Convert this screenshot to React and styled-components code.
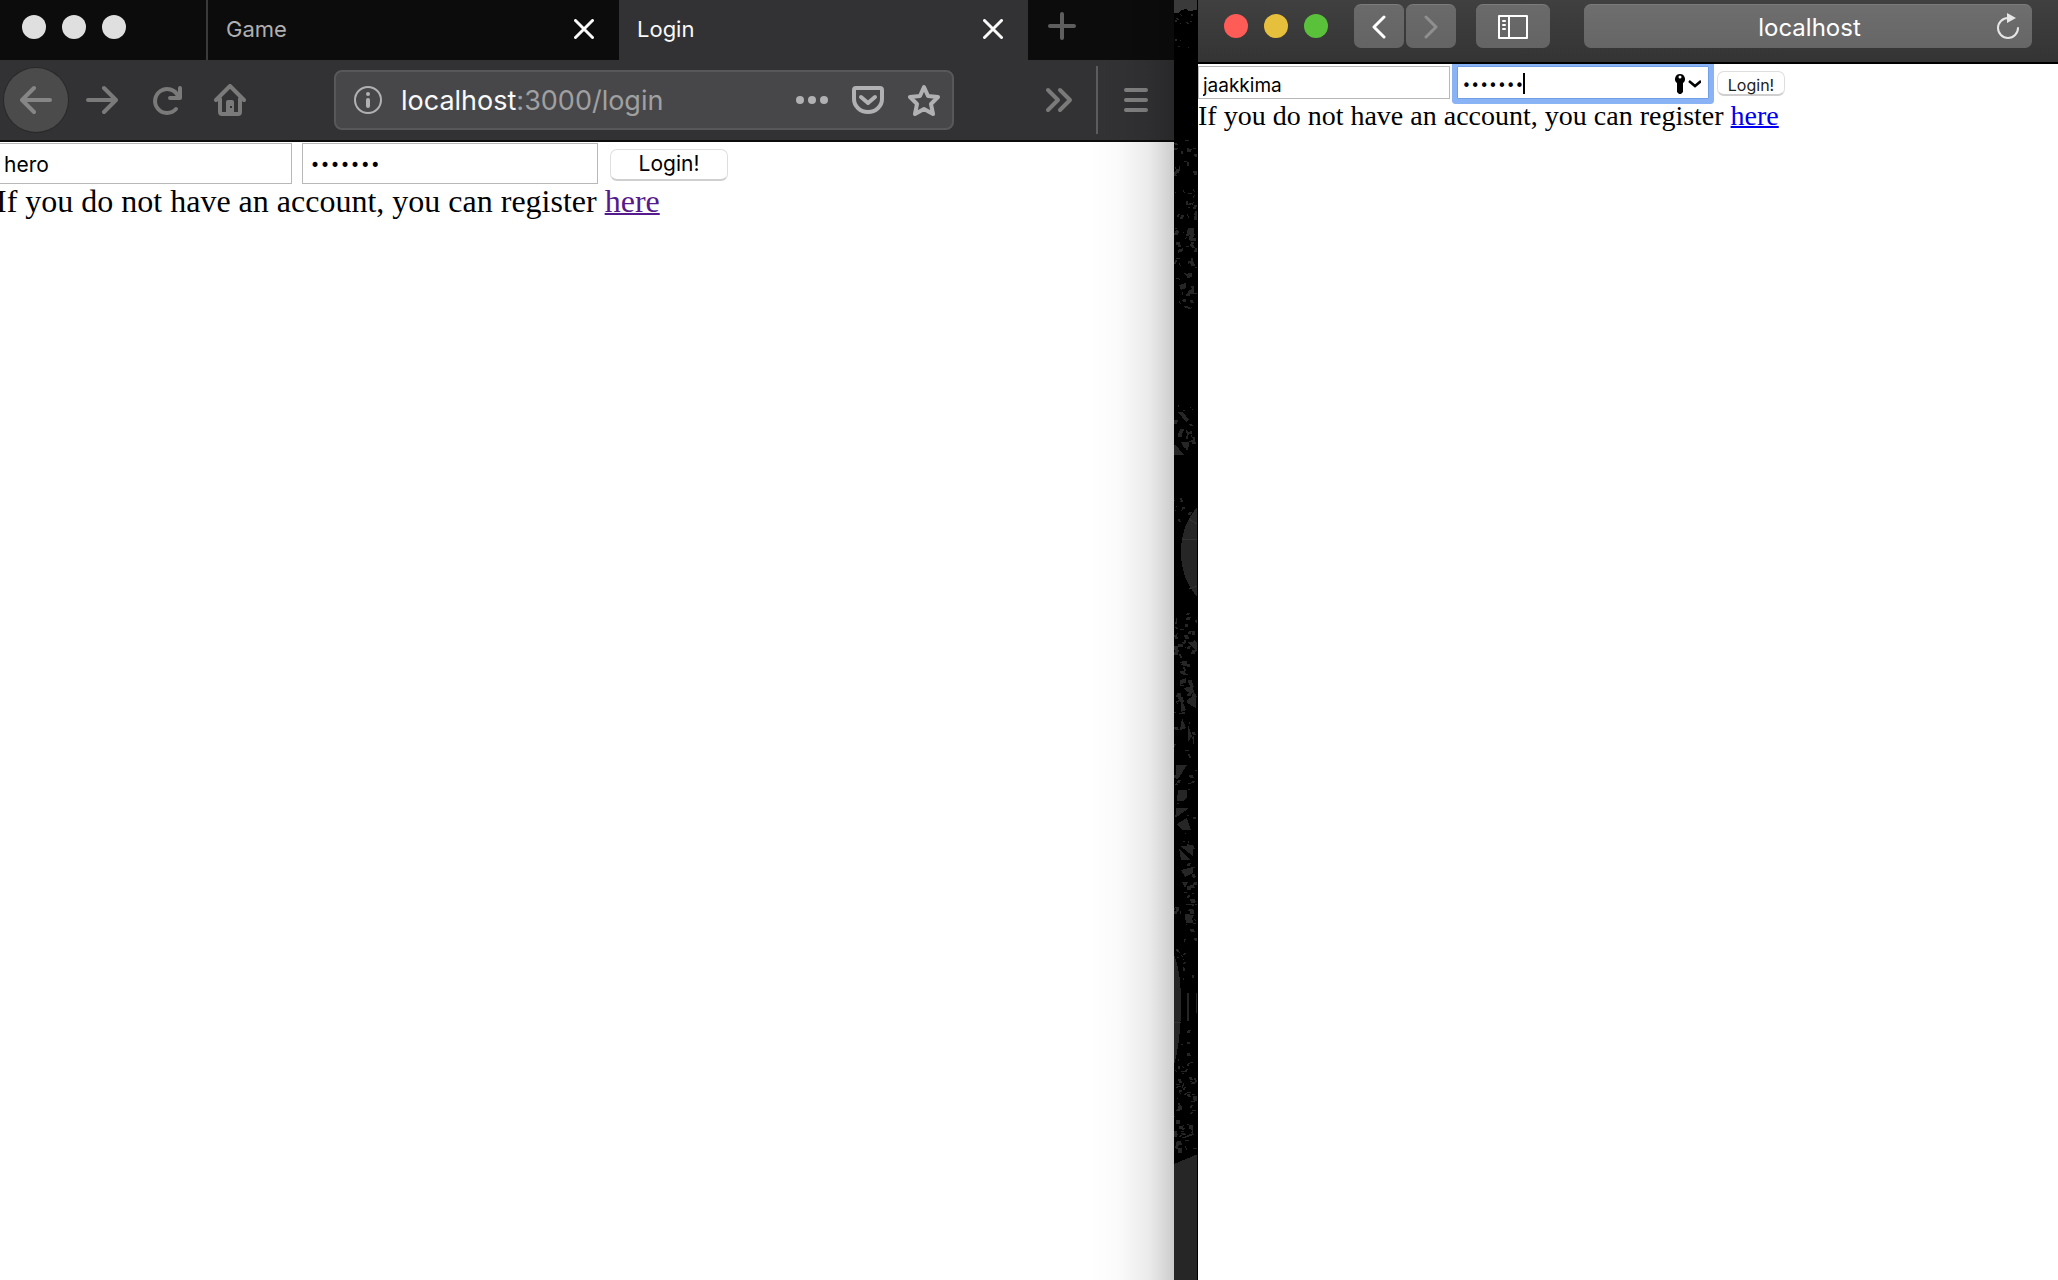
import React from "react";
import styled, { createGlobalStyle, css } from "styled-components";

const GlobalStyle = createGlobalStyle`
  *, *::before, *::after { box-sizing: border-box; }
  html, body, #root { height: 100%; }
  body { margin: 0; background: #000; overflow: hidden; }
  button, input { font-family: Inter, "Liberation Sans", sans-serif; margin: 0; }
`;

const Desktop = styled.div`
  display: grid;
  grid-template-columns: minmax(0, 1174fr) 24px minmax(0, 860fr);
  min-height: 100%;
`;

const Window = styled.section`
  position: relative;
  display: flex;
  flex-direction: column;
  min-width: 0;
  overflow: hidden;
  background: #fff;
  font-family: Inter, "Liberation Sans", sans-serif;
`;

const Shade = styled.div`
  position: absolute;
  inset: 0 0 0 auto;
  width: 84px;
  pointer-events: none;
  background: linear-gradient(to right, transparent, rgba(0, 0, 0, 0.02) 35%, rgba(0, 0, 0, 0.08) 70%, rgba(0, 0, 0, 0.2));
`;

const Lights = styled.div`
  display: flex;
  gap: 16px;
`;

const Light = styled.button`
  width: 24px;
  height: 24px;
  padding: 0;
  border: 0;
  border-radius: 50%;
  background: ${(p) => p.$color};
`;

const IconButton = styled.button`
  display: grid;
  place-items: center;
  flex: none;
  width: ${(p) => p.$width || 32}px;
  height: ${(p) => p.$height || 32}px;
  padding: 0;
  border: 0;
  background: none;
  color: ${(p) => p.$color || "#7a7a7b"};
  ${(p) => p.$round && css`
    border-radius: 50%;
    background: #4b4b4b;
    box-shadow: 0 0 0 1px #29292b;
  `}
`;

const TabStrip = styled.header`
  display: flex;
  height: 60px;
  background: #0c0c0d;
`;

const TabLights = styled.div`
  width: 208px;
  padding: 15px 22px;
  border-right: 2px solid #3b3b3c;
`;

const Tab = styled.div`
  display: flex;
  align-items: center;
  justify-content: space-between;
  flex: 0 0 ${(p) => p.$width}px;
  padding: 0 19px 2px 18px;
  background: ${(p) => (p.$active ? "#323234" : "transparent")};
  color: ${(p) => (p.$active ? "#f9f9fa" : "#b0b0b1")};
  font-size: 22px;
  line-height: 30px;
`;

const NewTab = styled.div`
  padding: 10px 18px;
`;

const NavBar = styled.nav`
  display: flex;
  align-items: center;
  height: 82px;
  padding: 0 20px 0 4px;
  border-bottom: 2px solid #0c0c0d;
  background: #323234;
`;

const NavButtons = styled.div`
  display: flex;
  align-items: center;
  gap: 16px;
  flex: 1;
`;

const AddressBar = styled.div`
  display: flex;
  align-items: center;
  flex: 0 1 620px;
  height: 60px;
  padding: 0 12px 0 16px;
  border: 2px solid #58585a;
  border-radius: 8px;
  background: #474749;
  color: #b1b1b3;
`;

const Address = styled.div`
  flex: 1;
  padding: 2px 0 0 17px;
  color: #a0a0a1;
  font-size: 27px;
  line-height: 36px;
  b { color: #f9f9fa; font-weight: 400; }
`;

const AddressActions = styled.div`
  display: flex;
  gap: 24px;
`;

const NavEnd = styled.div`
  display: flex;
  align-items: center;
  justify-content: flex-end;
  flex: 0 1 200px;
`;

const Divider = styled.div`
  width: 2px;
  height: 68px;
  margin: 0 20px;
  background: #5c5c5e;
`;

const SafariBar = styled.header`
  position: relative;
  z-index: 1;
  display: flex;
  align-items: flex-start;
  height: 64px;
  padding: 4px 26px 0 26px;
  border-bottom: 2px solid #000;
  background: linear-gradient(#404040, #343434);
`;

const SafariLights = styled.div`
  padding: 10px 26px 0 0;
`;

const SafariButton = styled.button`
  display: grid;
  place-items: center;
  flex: none;
  width: ${(p) => p.$width}px;
  height: 44px;
  margin-right: ${(p) => p.$after}px;
  padding: 0;
  border: 0;
  border-top: 1px solid #7b7b7b;
  border-radius: 7px;
  background: linear-gradient(#6a6a6a, #646464);
  color: ${(p) => (p.disabled ? "#8f8f8f" : "#fff")};
`;

const SafariAddress = styled.div`
  display: flex;
  align-items: center;
  flex: 1;
  height: 44px;
  padding: 0 11px 0 40px;
  border-top: 1px solid #7b7b7b;
  border-radius: 7px;
  background: linear-gradient(#6e6e6e, #666);
  color: #fff;
  font-size: 24px;
  line-height: 32px;
  text-align: center;
  span { flex: 1; padding-top: 2px; }
`;

const Page = styled.main`
  flex: 1;
  margin-left: ${(p) => (p.$zoomed ? -4 : 0)}px;
  padding-top: ${(p) => (p.$zoomed ? 1 : 2)}px;
  color: #000;
`;

const Form = styled.form`
  display: flex;
  align-items: center;
  gap: ${(p) => (p.$zoomed ? 10 : 7)}px;
`;

const Field = styled.div`
  position: relative;
  flex: none;
`;

const TextInput = styled.input`
  display: block;
  width: ${(p) => (p.$zoomed ? 296 : 252)}px;
  height: ${(p) => (p.$zoomed ? 41 : 33)}px;
  padding: ${(p) => (p.$zoomed ? "2px 7px 0" : "6px 4px 0")};
  border: 1px solid #b8b8b8;
  border-radius: 0;
  outline: none;
  background: #fff;
  color: #000;
  font-size: ${(p) => (p.$zoomed ? 21 : 19)}px;
  &[type="password"] {
    font-family: "DejaVu Sans", sans-serif;
    font-size: ${(p) => (p.$zoomed ? 17 : 15)}px;
  }
  ${(p) => p.$ring && css`
    border-color: #6f9fe6;
    box-shadow: 0 0 0 5px #8ab3f6;
    border-radius: 1px;
  `}
`;

const Caret = styled.i`
  position: absolute;
  left: 66px;
  top: 7px;
  width: 2px;
  height: 21px;
  background: #000;
`;

const FieldTools = styled.div`
  position: absolute;
  right: 8px;
  top: 7px;
  display: flex;
`;

const Submit = styled.button`
  width: ${(p) => (p.$zoomed ? 118 : 68)}px;
  height: ${(p) => (p.$zoomed ? 32 : 25)}px;
  margin: ${(p) => (p.$zoomed ? "2px 0 0 2px" : "2px 0 0 1px")};
  padding: ${(p) => (p.$zoomed ? "0" : "3px 0 0")};
  border: 1px solid #dedede;
  border-bottom: 2px solid #cfcfcf;
  border-radius: 7px;
  background: #fff;
  color: ${(p) => (p.$zoomed ? "#000" : "#222")};
  font-size: ${(p) => (p.$zoomed ? 21 : 16)}px;
  line-height: 20px;
`;

const Note = styled.p`
  margin: 0;
  font-family: "Liberation Serif", "Times New Roman", serif;
  font-size: ${(p) => (p.$zoomed ? 32 : 28)}px;
  line-height: 34px;
  white-space: nowrap;
`;

const Link = styled.a`
  color: ${(p) => (p.$visited ? "#551a8b" : "#0000ee")};
  text-decoration-thickness: 2px;
`;

const Wallpaper = styled.div`
  position: relative;
  overflow: hidden;
  border-right: 1px solid #000;
  background: #000;
  svg { position: absolute; top: 0; left: 0; }
`;

const Icon = ({ size = 32, w, h, sw = 4, children }) => (
  <svg width={w || size} height={h || size} viewBox={`0 0 ${w || size} ${h || size}`} fill="none"
    stroke="currentColor" strokeWidth={sw} strokeLinecap="round" strokeLinejoin="round" aria-hidden="true">
    {children}
  </svg>
);

const CloseIcon = () => <Icon size={20} sw={3}><path d="M1.500 1.500l17 17M18.500 1.500l-17 17" /></Icon>;

/* Small flecks of the wallpaper drawing: [from y, to y, count, largest side] */
const FLECK_BANDS = [
  [12, 24, 8, 2], [36, 48, 4, 2], [140, 176, 16, 4], [188, 225, 16, 4], [225, 310, 40, 4],
  [395, 412, 5, 2], [412, 450, 12, 4], [498, 524, 12, 3], [612, 640, 14, 4], [640, 700, 30, 5],
  [700, 780, 16, 4], [780, 880, 20, 3], [880, 940, 32, 4], [940, 980, 12, 3], [1030, 1070, 12, 3], [1070, 1152, 56, 4],
];

function makeFlecks() {
  let seed = 7;
  const rnd = (n) => {
    seed = (seed * 16807) % 2147483647;
    return Math.floor((seed / 2147483647) * n);
  };
  const out = [];
  FLECK_BANDS.forEach(([from, to, count, side]) => {
    for (let i = 0; i < count; i++) {
      const w = 1 + rnd(side);
      const h = 1 + rnd(side);
      out.push(`M${rnd(22)} ${from + rnd(to - from)}h${w}l${rnd(3) - 1} ${h}h${-w}z`);
    }
  });
  return out.join("");
}
const flecks = makeFlecks();

const SHARDS = [
  "M14 228h6v7h-7v-3zM15 238h7v3h-6zM4 250l5-2v3l-5 2zM5 285l7-2v5l-5 2zM14 291l6-3v6h-6z",
  "M4 412h5l6 8-3 2zM1 444l9 11H0v-8zM7 442h8v5l-5 1zM12 430l5 3-4 3z",
  "M14 642l9 10v-10zM6 680l6-2v5l-6 1zM10 688l8-2 3 8-8-2zM13 700l9-6v14l-9-5zM7 698l5 12-5 2z",
  "M8 718l4 10-6 2zM14 724l4 12-4 6zM20 736v10l-2-9zM2 765h11l-9 14H2zM4 790h9v8l-4 3H3z",
  "M2 808h13l-11 8H2zM3 824l10-6 4 12H8zM6 846l13 10V845zM5 848l11 12H7zM7 870l12-3v6l-8 4zM8 882h6l-3 6zM11 914l9 1-4 8h-4z",
  "M7 1138l12-5 1 2-10 3z",
].join("");

function LoginPage({ zoomed, id, name, ring }) {
  return (
    <Page $zoomed={zoomed}>
      <Form $zoomed={zoomed} onSubmit={(e) => e.preventDefault()}>
        <Field><TextInput $zoomed={zoomed} aria-label="Username" name={`${id}-user`} defaultValue={name} /></Field>
        <Field>
          <TextInput $zoomed={zoomed} $ring={ring} type="password" aria-label="Password" name={`${id}-pass`} defaultValue="secret1" />
          {ring && <>
            <Caret />
            <FieldTools>
              <svg width="28" height="22" viewBox="0 0 28 22" aria-hidden="true">
                <path fillRule="evenodd" d="M7 1a5 5 0 0 1 3 9v9l-2 2H6l-2-2V10A5 5 0 0 1 7 1zM7 2.500a1.500 1.500 0 1 0 0 3 1.500 1.500 0 0 0 0-3z" />
                <path d="M16 8l6 5 6-5" fill="none" stroke="#000" strokeWidth="2.500" />
              </svg>
            </FieldTools>
          </>}
        </Field>
        <Submit $zoomed={zoomed}>Login!</Submit>
      </Form>
      <Note $zoomed={zoomed}>If you do not have an account, you can register <Link href="#register" $visited={zoomed}>here</Link></Note>
    </Page>
  );
}

export default function App() {
  return (
    <>
      <GlobalStyle />
      <Desktop>
        <Window>
          <TabStrip>
            <TabLights>
              <Lights>
                <Light $color="#dfdfdf" aria-label="Close window" />
                <Light $color="#dfdfdf" aria-label="Minimize window" />
                <Light $color="#dfdfdf" aria-label="Zoom window" />
              </Lights>
            </TabLights>
            <Tab $width={411}>Game<IconButton $width={32} $color="#f9f9fa" aria-label="Close Game tab"><CloseIcon /></IconButton></Tab>
            <Tab $width={409} $active>Login<IconButton $width={32} $color="#f9f9fa" aria-label="Close Login tab"><CloseIcon /></IconButton></Tab>
            <NewTab>
              <IconButton $color="#5e5e5f" aria-label="New tab"><Icon><path d="M16 4v24M4 16h24" /></Icon></IconButton>
            </NewTab>
          </TabStrip>
          <NavBar>
            <NavButtons>
              <IconButton $round $width={64} $height={64} $color="#868686" aria-label="Back"><Icon><path d="M30 16H3M14 4L2 16l12 12" /></Icon></IconButton>
              <IconButton $width={36} aria-label="Forward"><Icon><path d="M2 16h27M18 4l12 12-12 12" /></Icon></IconButton>
              <IconButton $width={62} aria-label="Reload"><Icon><path d="M25 25A12 12 0 1 1 27 12M29 4v10H19" /></Icon></IconButton>
              <IconButton aria-label="Home">
                <Icon><path d="M2 16L16 2l14 14M6 15v13a2 2 0 0 0 2 2h16a2 2 0 0 0 2-2V15" /><path d="M12 29V18a2 2 0 0 1 2-2h4a2 2 0 0 1 2 2v11z" fill="currentColor" stroke="none" /><path d="M17 22v2" stroke="#323234" strokeWidth="2" strokeLinecap="butt" /></Icon>
              </IconButton>
            </NavButtons>
            <AddressBar>
              <Icon sw={2}><circle cx="16" cy="16" r="13" /><path d="M16 16v6" strokeWidth="4" /><circle cx="16" cy="10" r="2" fill="currentColor" stroke="none" /></Icon>
              <Address><b>localhost</b>:3000/login</Address>
              <AddressActions>
                <IconButton $color="#b1b1b3" aria-label="Page actions"><Icon><g fill="currentColor" stroke="none"><circle cx="4" cy="16" r="4" /><circle cx="16" cy="16" r="4" /><circle cx="28" cy="16" r="4" /></g></Icon></IconButton>
                <IconButton $color="#b1b1b3" aria-label="Save to Pocket"><Icon><path d="M4 4h24a2 2 0 0 1 2 2v9a14 13 0 0 1-28 0V6a2 2 0 0 1 2-2zM9 13l7 6 7-6" /></Icon></IconButton>
                <IconButton $color="#b1b1b3" aria-label="Bookmark"><Icon><path d="M16 3l4 9 10 1-7 7 2 10-9-5-9 5 2-10-7-7 10-1z" /></Icon></IconButton>
              </AddressActions>
            </AddressBar>
            <NavEnd>
              <IconButton aria-label="More tools"><Icon><path d="M4 6l10 10L4 26M16 6l10 10-10 10" /></Icon></IconButton>
              <Divider />
              <IconButton $width={36} $color="#828283" aria-label="Menu"><Icon><path d="M6 6h20M6 16h20M6 26h20" /></Icon></IconButton>
            </NavEnd>
          </NavBar>
          <LoginPage zoomed id="left" name="hero" />
          <Shade />
        </Window>

        <Wallpaper>
          <svg width="24" height="1280" viewBox="0 0 24 1280" fill="#262626" shapeRendering="crispEdges" aria-hidden="true">
            <path fill="#3a3a3a" d="M0 0h24v10l-9 1-3-2-5 1-2 3H0z" />
            <path d={flecks} />
            <path d={SHARDS} />
            <path d="M24 506Q7 525 7 552T24 598zM0 955q7 15 7 50t-7 60zM0 1164l24-10v126H0zM13 993h2v28h-2zM22 993h1v20h-1z" />
            <path d="M15 519l8 5M8 540l15-1M15 589l8-3M0 1022l7 1" stroke="#333" fill="none" />
          </svg>
        </Wallpaper>

        <Window>
          <SafariBar>
            <SafariLights>
              <Lights>
                <Light $color="#ff5b57" aria-label="Close window" />
                <Light $color="#e6bf3c" aria-label="Minimize window" />
                <Light $color="#5ac13b" aria-label="Zoom window" />
              </Lights>
            </SafariLights>
            <SafariButton $width={50} $after={2} aria-label="Back"><Icon w={14} h={24} sw={3}><path d="M12 2L2 12l10 10" /></Icon></SafariButton>
            <SafariButton $width={50} $after={20} disabled aria-label="Forward"><Icon w={14} h={24} sw={3}><path d="M2 2l10 10L2 22" /></Icon></SafariButton>
            <SafariButton $width={74} $after={34} aria-label="Sidebar">
              <Icon w={30} h={24} sw={2}><path d="M1 1h28v22H1zM11 1v22M5 6h2M5 10h2M5 14h2" /></Icon>
            </SafariButton>
            <SafariAddress>
              <span>localhost</span>
              <IconButton $width={26} $color="#e6e6e6" aria-label="Reload">
                <Icon w={24} h={28} sw={2}><path d="M22 15A10 10 0 1 1 12 5" /><path d="M11 0l9 5-9 5z" fill="currentColor" stroke="none" /></Icon>
              </IconButton>
            </SafariAddress>
          </SafariBar>
          <LoginPage id="right" name="jaakkima" ring />
        </Window>
      </Desktop>
    </>
  );
}
